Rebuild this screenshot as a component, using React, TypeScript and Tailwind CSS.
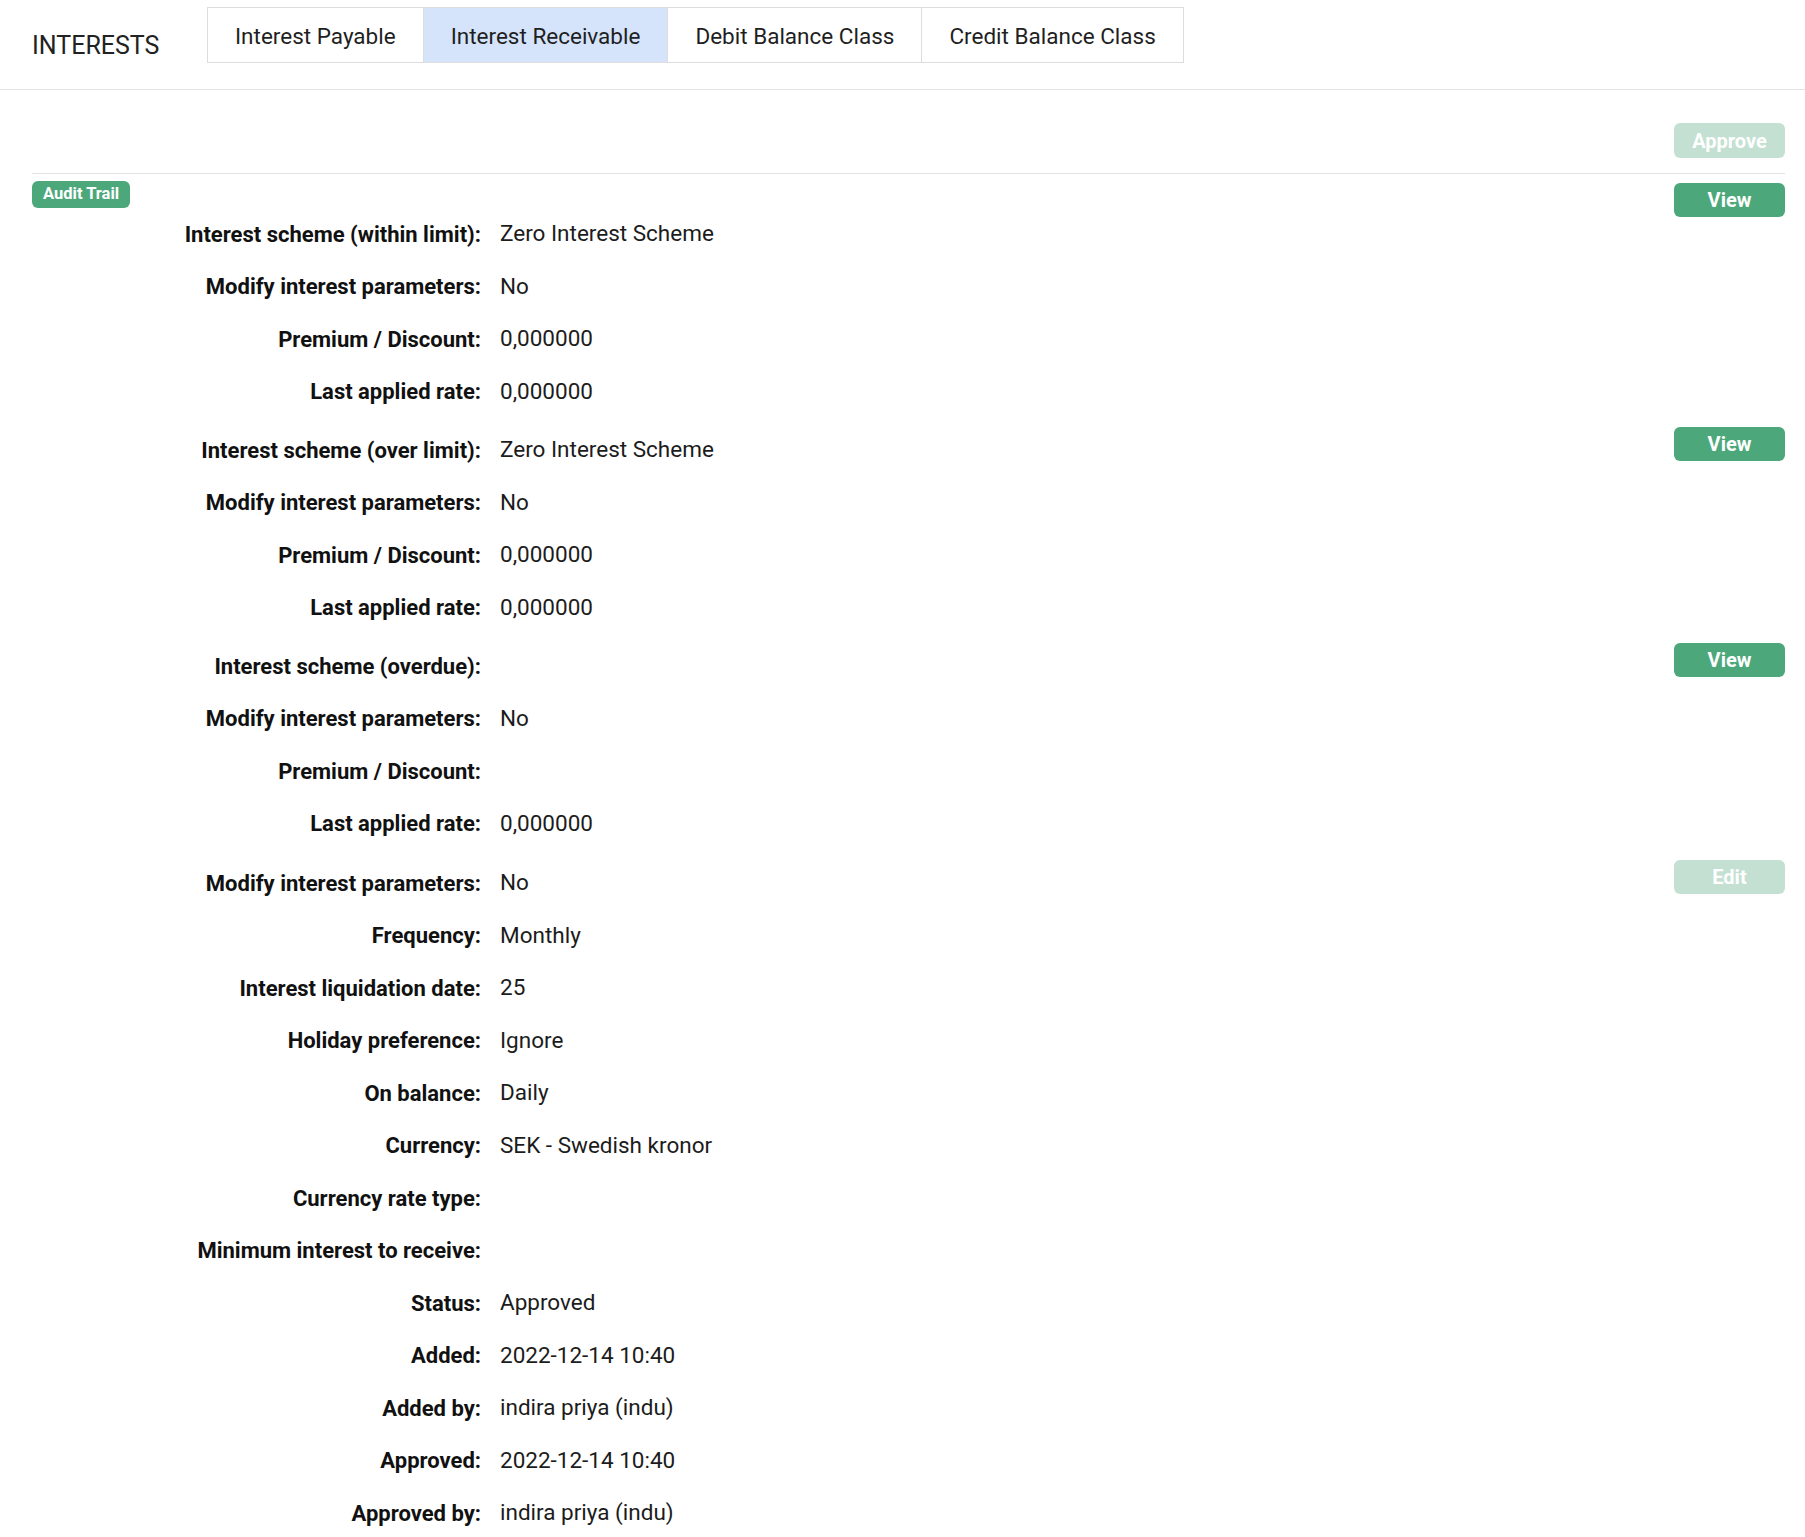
import React from "react";

type Row = { label: string; value?: string };

const groups: { button: "View" | "Edit"; rows: Row[] }[] = [
  {
    button: "View",
    rows: [
      { label: "Interest scheme (within limit):", value: "Zero Interest Scheme" },
      { label: "Modify interest parameters:", value: "No" },
      { label: "Premium / Discount:", value: "0,000000" },
      { label: "Last applied rate:", value: "0,000000" },
    ],
  },
  {
    button: "View",
    rows: [
      { label: "Interest scheme (over limit):", value: "Zero Interest Scheme" },
      { label: "Modify interest parameters:", value: "No" },
      { label: "Premium / Discount:", value: "0,000000" },
      { label: "Last applied rate:", value: "0,000000" },
    ],
  },
  {
    button: "View",
    rows: [
      { label: "Interest scheme (overdue):" },
      { label: "Modify interest parameters:", value: "No" },
      { label: "Premium / Discount:" },
      { label: "Last applied rate:", value: "0,000000" },
    ],
  },
  {
    button: "Edit",
    rows: [
      { label: "Modify interest parameters:", value: "No" },
      { label: "Frequency:", value: "Monthly" },
      { label: "Interest liquidation date:", value: "25" },
      { label: "Holiday preference:", value: "Ignore" },
      { label: "On balance:", value: "Daily" },
      { label: "Currency:", value: "SEK - Swedish kronor" },
      { label: "Currency rate type:" },
      { label: "Minimum interest to receive:" },
      { label: "Status:", value: "Approved" },
      { label: "Added:", value: "2022-12-14 10:40" },
      { label: "Added by:", value: "indira priya (indu)" },
      { label: "Approved:", value: "2022-12-14 10:40" },
      { label: "Approved by:", value: "indira priya (indu)" },
    ],
  },
];

const tabs = ["Interest Payable", "Interest Receivable", "Debit Balance Class", "Credit Balance Class"];

function DetailRow({ row }: { row: Row }) {
  return (
    <div className="flex h-[52.5px] items-center">
      <div className="w-[449px] shrink-0 text-right font-bold text-[#111]">{row.label}</div>
      <div className="ml-[19px] text-[22.5px] text-[#1c1c1c]">{row.value}</div>
    </div>
  );
}

function ActionButton({ label, disabled }: { label: string; disabled?: boolean }) {
  return (
    <button
      type="button"
      disabled={disabled}
      className={
        disabled
          ? "flex h-[34px] w-[111px] items-center justify-center rounded-md bg-[#c3e0d2] text-[20px] font-bold text-white"
          : "flex h-[34px] w-[111px] items-center justify-center rounded-md bg-[#4ca87b] text-[20px] font-bold text-white"
      }
    >
      {label}
    </button>
  );
}

export default function App() {
  return (
    <div className="min-h-screen bg-white font-['Roboto',sans-serif] text-[22px] text-[#1c1c1c]">
      {/* Header */}
      <div className="flex h-[90px] border-b border-[#e2e2e2] pl-[32px]">
        <div className="w-[175px] shrink-0 pt-[29px] text-[25px] leading-[34px] text-[#222]">INTERESTS</div>
        <div className="mt-[7px] flex h-[56px] border border-[#dddddd] text-[22.5px]">
          {tabs.map((t, i) => (
            <div
              key={t}
              className={
                (i > 0 ? "border-l border-[#dddddd] " : "") +
                (i === 1 ? "bg-[#d5e4fb] " : "bg-white ") +
                "flex items-center px-[27px] pt-[3px] text-[#1f1f1f]"
              }
            >
              {t}
            </div>
          ))}
        </div>
      </div>

      <div className="pl-[32px] pr-[20px] pt-[33px]">
        <div className="flex justify-end">
          <button
            type="button"
            disabled
            className="flex h-[35px] w-[111px] items-center justify-center rounded-md bg-[#c3e0d2] text-[20px] font-bold text-white"
          >
            Approve
          </button>
        </div>
        <div className="mt-[15px] border-t border-[#e2e2e2]" />

        {groups.map((g, gi) => (
          <div
            key={gi}
            className={
              gi === 0 ? "flex" : gi === 3 ? "mt-[7px] flex" : "mt-[6px] flex"
            }
          >
            <div className="flex-1">
              {gi === 0 && (
                <div className="mt-[7px] flex">
                  <span className="flex h-[27px] items-center rounded-md bg-[#4ca87b] px-[11px] text-[16.5px] font-bold text-white">
                    Audit Trail
                  </span>
                </div>
              )}
              {g.rows.map((r, ri) => (
                <DetailRow key={ri} row={r} />
              ))}
            </div>
            <div className={gi === 0 ? "mt-[9px]" : "mt-[3px]"}>
              <ActionButton label={g.button} disabled={g.button === "Edit"} />
            </div>
          </div>
        ))}
      </div>
    </div>
  );
}
